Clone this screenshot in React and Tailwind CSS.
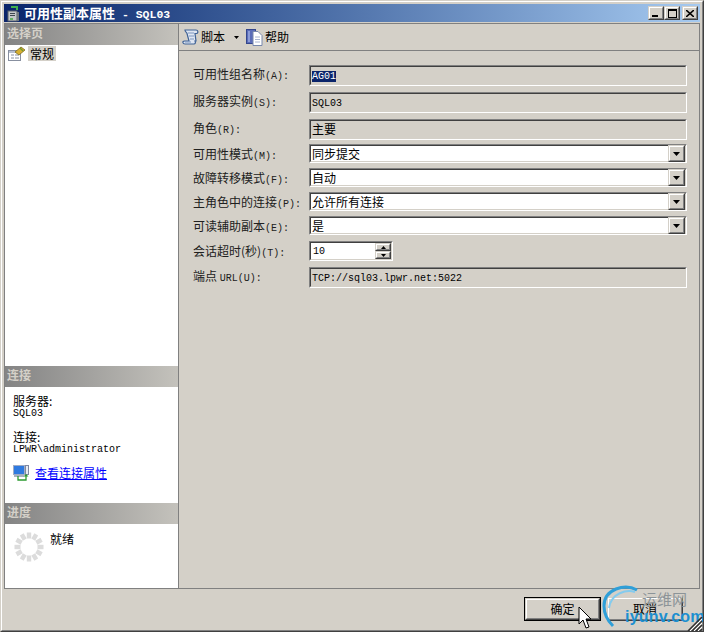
const LATIN = "font-['Liberation_Mono',monospace] text-[10px]";

function Mixed({ cjk, latin }) {
  return (
    <span className="whitespace-nowrap">
      {cjk}
      <span className={LATIN}>{latin}</span>
    </span>
  );
}

function Sunken({ bg = "bg-[#d4d0c8]", className = "", children }) {
  return (
    <div className={`border-t border-l border-t-[#808080] border-l-[#808080] border-r border-b border-r-white border-b-white ${className}`}>
      <div className={`h-full border-t border-l border-t-[#404040] border-l-[#404040] border-r border-b border-r-[#d4d0c8] border-b-[#d4d0c8] ${bg} flex items-center`}>
        {children}
      </div>
    </div>
  );
}

function Raised({ className = "", children }) {
  return (
    <div className={`border-t border-l border-t-[#d4d0c8] border-l-[#d4d0c8] border-r border-b border-r-[#404040] border-b-[#404040] ${className}`}>
      <div className="w-full h-full border-t border-l border-t-white border-l-white border-r border-b border-r-[#808080] border-b-[#808080] bg-[#d4d0c8] flex items-center justify-center">
        {children}
      </div>
    </div>
  );
}

function Row({ cjk, latin, className = "", labelClass = "", children }) {
  return (
    <div className={`flex items-center ${className}`}>
      <div className={`w-[116px] shrink-0 text-[12px] leading-[15px] text-[#202020] ${labelClass}`}>
        <Mixed cjk={cjk} latin={latin} />
      </div>
      {children}
    </div>
  );
}

function ReadOnly({ children }) {
  return (
    <Sunken className="w-[378px] h-[21px]">
      <div className="pl-px pb-0.5 text-[12px] leading-none text-black">{children}</div>
    </Sunken>
  );
}

function Combo({ value }) {
  return (
    <Sunken bg="bg-white" className="w-[378px] h-[19px]">
      <div className="flex-1 pl-px text-[12px] leading-none text-black">{value}</div>
      <Raised className="w-[17px] h-[17px] shrink-0">
        <svg width="7" height="4" viewBox="0 0 7 4"><path d="M0 0h7L3.5 4z" fill="#000" /></svg>
      </Raised>
    </Sunken>
  );
}

function PanelHeader({ children }) {
  return (
    <div className="h-[21px] shrink-0 px-[2px] pb-[3px] flex items-center bg-gradient-to-r from-[#848484] to-[#c4c2bc] text-[12px] font-bold text-[#d4d0c8]">
      {children}
    </div>
  );
}

function TitleIcon() {
  return (
    <svg width="14" height="17" viewBox="0 0 14 17">
      <rect x="1" y="6" width="9" height="10" fill="#c4c8c8" stroke="#586068" />
      <rect x="10" y="7" width="2" height="9" fill="#707880" />
      <rect x="3" y="8" width="5" height="1" fill="#404850" />
      <rect x="3" y="10" width="5" height="1" fill="#404850" />
      <rect x="3" y="13" width="3" height="2" fill="#60b060" />
      <path d="M4 2h6v3" fill="none" stroke="#40b050" strokeWidth="2" />
    </svg>
  );
}

function ScrollIcon() {
  return (
    <svg width="17" height="17" viewBox="0 0 17 17">
      <path d="M3 1h11c2 0 2.500 2.500 1 3.500h-2L14 12h-1c1 2 0 3-1 3H3c-2.500 0-3-3-.5-3H7L5 4.500C4.500 3 3 3 3 1z" fill="#dfe6f2" stroke="#3f6296" strokeWidth="1.200" />
      <path d="M6 4h6M7 7h5M8 10h4" stroke="#7c96c0" />
      <path d="M3 13h6" stroke="#7c96c0" />
    </svg>
  );
}

function HelpIcon() {
  return (
    <svg width="17" height="17" viewBox="0 0 17 17">
      <rect x="0.500" y="0.500" width="9" height="14" fill="#5a6cb8" stroke="#34468c" />
      <rect x="2" y="2" width="2" height="11" fill="#8c9cd8" />
      <path d="M7 2.500h5l4 4v10H7z" fill="#fff" stroke="#7888ac" />
      <path d="M9 8h5M9 10.500h5M9 13h5" stroke="#a8b4d0" />
    </svg>
  );
}

function PageIcon() {
  return (
    <svg width="18" height="15" viewBox="0 0 18 15">
      <rect x="0.500" y="4.500" width="12" height="10" fill="#fff" stroke="#8890a0" />
      <rect x="1" y="5" width="11" height="2" fill="#b8c0d0" />
      <path d="M3 9h3M7 9h4M3 12h3M7 12h4" stroke="#8890a0" />
      <path d="M7 6l6-5 4 3-6 5z" fill="#d8b030" stroke="#7c6a20" strokeWidth="0.800" />
      <path d="M12 2l3 3" stroke="#6a9a30" strokeWidth="1.200" />
    </svg>
  );
}

function LinkIcon() {
  return (
    <svg width="17" height="17" viewBox="0 0 17 17">
      <rect x="0.500" y="1.500" width="11" height="9" fill="#2f7ae0" stroke="#a0acc4" />
      <rect x="1" y="11" width="10" height="2" fill="#a8b0c0" />
      <rect x="12.500" y="1.500" width="3" height="9" fill="#e8ecf4" stroke="#8088a0" />
      <path d="M5 12v4h8v-4" fill="none" stroke="#2c9a30" strokeWidth="1.300" />
      <path d="M10.500 12.500L13 10l2.500 2.500z" fill="#2c9a30" />
    </svg>
  );
}

function Spinner() {
  const dots = Array.from({ length: 12 }, (_, i) => i * 30);
  return (
    <svg width="30" height="30" viewBox="0 0 30 30">
      {dots.map((a) => (
        <rect key={a} x="12.800" y="0.500" width="4.400" height="6" fill="#dcdcdc" transform={`rotate(${a} 15 15)`} />
      ))}
    </svg>
  );
}

function Watermark() {
  return (
    <div className="absolute left-[600px] top-[583px] w-[102px] h-[47px] pointer-events-none">
      <svg className="absolute left-0 top-0" width="42" height="44" viewBox="0 0 42 44">
        <path d="M36 6C24-1 3 5 3 22c0 8 4 15 9 20" fill="none" stroke="#2f9fd8" strokeWidth="3" />
        <path d="M34 8C26 5 10 9 8 24" fill="none" stroke="#84cbee" strokeWidth="2" />
      </svg>
      <span className="absolute left-[41px] top-[7px] text-[15px] leading-none text-[#8c9498] whitespace-nowrap font-['Noto_Sans_CJK_SC',sans-serif]">运维网</span>
      <span className="absolute left-[24px] top-[25px] text-[16px] leading-none font-bold text-[#1c8fd0] tracking-[0.2px] whitespace-nowrap font-['Liberation_Sans',sans-serif]">iyunv.com</span>
    </div>
  );
}

export default function App() {
  return (
    <div className="relative w-[704px] h-[632px] overflow-hidden bg-[#d4d0c8] font-['Noto_Sans_CJK_SC','Liberation_Sans',sans-serif] border-t border-l border-t-[#d4d0c8] border-l-[#d4d0c8] border-r border-b border-r-[#404040] border-b-[#404040]">
      <div className="h-full border-t border-l border-t-white border-l-white border-r border-b border-r-[#808080] border-b-[#808080] pt-0.5 pl-0.5 pr-0.5 flex flex-col">
        <div className="h-[18px] shrink-0 flex items-center bg-gradient-to-r from-[#0a246a] to-[#a6caf0] text-white">
          <div className="w-5 flex justify-center"><TitleIcon /></div>
          <span className="text-[13px] font-bold leading-none whitespace-nowrap">
            可用性副本属性<span className="font-['Liberation_Mono',monospace] text-[11.500px] whitespace-pre"> - SQL03</span>
          </span>
          <div className="ml-auto flex items-center pr-0.5">
            <Raised className="w-4 h-[14px]"><span className="block w-[6px] h-[2px] bg-black mt-[6px] mr-[2px]" /></Raised>
            <Raised className="w-4 h-[14px]"><span className="block w-[9px] h-[9px] border border-t-2 border-black" /></Raised>
            <Raised className="w-4 h-[14px] ml-0.5">
              <svg width="8" height="7" viewBox="0 0 8 7"><path d="M0 0l8 7M8 0L0 7" stroke="#000" strokeWidth="1.600" /></svg>
            </Raised>
          </div>
        </div>

        <div className="mt-px flex-1 min-h-0 flex flex-col">
          <div className="h-[566px] shrink-0 flex border-t border-b border-[#808080] w-[696px]">
            <div className="w-[175px] shrink-0 border-l border-r border-[#808080] bg-white flex flex-col">
              <PanelHeader>选择页</PanelHeader>
              <div className="flex-1 pl-[3px] pt-px">
                <div className="flex items-center gap-[2px]">
                  <PageIcon />
                  <span className="bg-[#d4d0c8] px-0.5 h-[15px] flex items-center text-[12px] leading-none text-black">常规</span>
                </div>
              </div>
              <PanelHeader>连接</PanelHeader>
              <div className="h-[116px] shrink-0 pl-2 pt-[7px] text-[12px] leading-[13px] text-black">
                <div>服务器:</div>
                <div className={LATIN}>SQL03</div>
                <div className="mt-[10px]">连接:</div>
                <div className={LATIN}>LPWR\administrator</div>
                <div className="mt-[8px] flex items-center gap-[5px]">
                  <LinkIcon />
                  <a href="#" className="text-[#0000ff] underline">查看连接属性</a>
                </div>
              </div>
              <PanelHeader>进度</PanelHeader>
              <div className="h-[64px] shrink-0 flex pl-[9px] pt-[8px]">
                <Spinner />
                <span className="ml-[6px] text-[12px] leading-[14px] text-black">就绪</span>
              </div>
            </div>

            <div className="w-[521px] shrink-0 border-r border-[#808080] flex flex-col">
              <div className="h-[27px] shrink-0 border-b border-[#808080] flex items-center pl-[3px] text-[12px] text-black">
                <ScrollIcon />
                <span className="ml-[2px] leading-none">脚本</span>
                <svg className="ml-[9px]" width="5" height="3" viewBox="0 0 5 3"><path d="M0 0h5L2.500 3z" fill="#000" /></svg>
                <span className="ml-[7px]"><HelpIcon /></span>
                <span className="ml-[2px] leading-none">帮助</span>
              </div>
              <div className="pl-[14px] pt-[14px]">
                <Row cjk="可用性组名称" latin="(A):" className="h-[21px]" labelClass="pb-[2px]">
                  <ReadOnly><span className={`${LATIN} bg-[#0a246a] text-white`}>AG01</span></ReadOnly>
                </Row>
                <Row cjk="服务器实例" latin="(S):" className="h-[21px] mt-[6px]" labelClass="pb-[2px]">
                  <ReadOnly><span className={LATIN}>SQL03</span></ReadOnly>
                </Row>
                <Row cjk="角色" latin="(R):" className="h-[21px] mt-[6px]" labelClass="pb-[2px]">
                  <ReadOnly>主要</ReadOnly>
                </Row>
                <Row cjk="可用性模式" latin="(M):" className="h-[19px] mt-[4px]" labelClass="pt-[2px]"><Combo value="同步提交" /></Row>
                <Row cjk="故障转移模式" latin="(F):" className="h-[19px] mt-[5px]" labelClass="pt-[2px]"><Combo value="自动" /></Row>
                <Row cjk="主角色中的连接" latin="(P):" className="h-[19px] mt-[5px]" labelClass="pt-[2px]"><Combo value="允许所有连接" /></Row>
                <Row cjk="可读辅助副本" latin="(E):" className="h-[19px] mt-[5px]" labelClass="pt-[2px]"><Combo value="是" /></Row>
                <Row cjk="会话超时(秒)" latin="(T):" className="h-[20px] mt-[6px]" labelClass="pt-[2px]">
                  <Sunken bg="bg-white" className="w-[84px] h-[20px]">
                    <div className={`flex-1 pl-0.5 ${LATIN} text-black`}>10</div>
                    <div className="flex flex-col shrink-0">
                      <Raised className="w-4 h-2">
                        <svg width="5" height="3" viewBox="0 0 5 3"><path d="M0 3h5L2.500 0z" fill="#000" /></svg>
                      </Raised>
                      <Raised className="w-4 h-2">
                        <svg width="5" height="3" viewBox="0 0 5 3"><path d="M0 0h5L2.500 3z" fill="#000" /></svg>
                      </Raised>
                    </div>
                  </Sunken>
                </Row>
                <Row cjk="端点 " latin="URL(U):" className="h-[21px] mt-[6px]" labelClass="pb-[2px]">
                  <ReadOnly><span className={LATIN}>TCP://sql03.lpwr.net:5022</span></ReadOnly>
                </Row>
              </div>
            </div>
          </div>

          <div className="flex-1 flex justify-end items-start pt-2 pr-[17px] gap-[6px]">
            <div className="border border-black w-[77px] h-[24px]">
              <Raised className="w-full h-full">
                <span className="text-[12px] leading-none text-black">确定</span>
              </Raised>
            </div>
            <Raised className="w-[76px] h-[24px]">
              <span className="text-[12px] leading-none text-black">取消</span>
            </Raised>
          </div>
        </div>
      </div>

      <Watermark />
      <svg className="absolute left-[577px] top-[605px]" width="14" height="24" viewBox="0 0 14 24">
        <path d="M1 1v17l4-4 3 8 3-1-3-8h5z" fill="#fff" stroke="#000" />
      </svg>
      <svg className="absolute left-[686px] top-[616px]" width="16" height="14" viewBox="0 0 16 14">
        <path d="M15 0L1 14M15 4L5 14M15 8L9 14M15 12L13 14" stroke="#303030" strokeWidth="1.500" />
        <path d="M15 2L3 14M15 6L7 14M15 10L11 14" stroke="#fff" strokeWidth="1" />
      </svg>
    </div>
  );
}
